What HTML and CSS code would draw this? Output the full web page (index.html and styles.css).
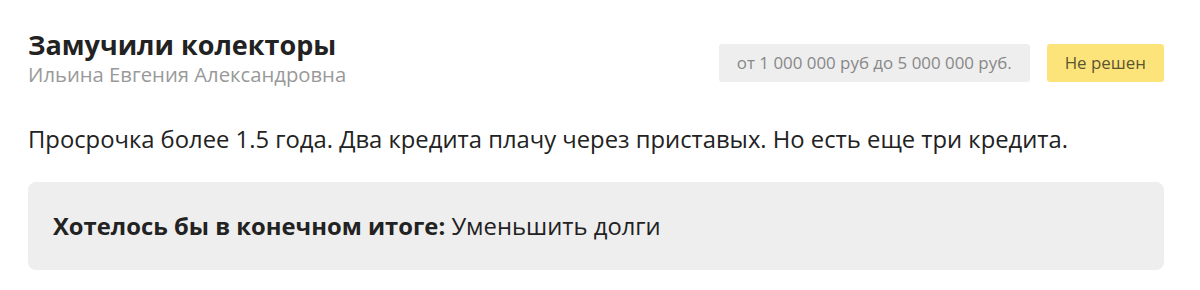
FILE: index.html
```html
<!DOCTYPE html>
<html lang="ru">
<head>
<meta charset="utf-8">
<link rel="stylesheet" href="styles.css">
</head>
<body>
<div class="card">
  <div class="head">
    <div class="titles">
      <h1 class="title">Замучили колекторы</h1>
      <div class="author">Ильина Евгения Александровна</div>
    </div>
    <div class="tags">
      <span class="tag tag-sum">от 1 000 000 руб до 5 000 000 руб.</span>
      <span class="tag tag-status">Не решен</span>
    </div>
  </div>
  <p class="desc">Просрочка более 1.5 года. Два кредита плачу через приставых. Но есть еще три кредита.</p>
  <div class="goal"><b>Хотелось бы в конечном итоге:</b> Уменьшить долги</div>
</div>
</body>
</html>
```
FILE: styles.css
```css
html, body { margin: 0; padding: 0; background: #fff; }
body { font-family: "Open Sans", "Liberation Sans", sans-serif; color: #222; }
.card { padding: 28px 36px 0 28px; }
.head { display: flex; justify-content: space-between; align-items: flex-start; }
.title { margin: 0; font-size: 27px; font-weight: 700; line-height: 34px; color: #222; }
.author { margin-top: 0; font-size: 20.25px; line-height: 24px; color: #999; }
.tags { display: flex; gap: 17px; margin-top: 16px; }
.tag { display: inline-block; height: 38px; line-height: 38px; padding: 0 18px; border-radius: 3px; font-size: 16.9px; }
.tag-sum { background: #eeeeee; color: #888; margin-left: 1px; }
.tag-status { background: #fde47a; color: #5c5630; }
.desc { margin: 37px 0 0; font-size: 23.8px; line-height: 32px; color: #222; }
.goal { margin-top: 27px; background: #eeeeee; border-radius: 8px; padding: 28px 25px 28px; font-size: 23.8px; line-height: 32px; color: #222; }
.goal b { font-weight: 700; }
```
